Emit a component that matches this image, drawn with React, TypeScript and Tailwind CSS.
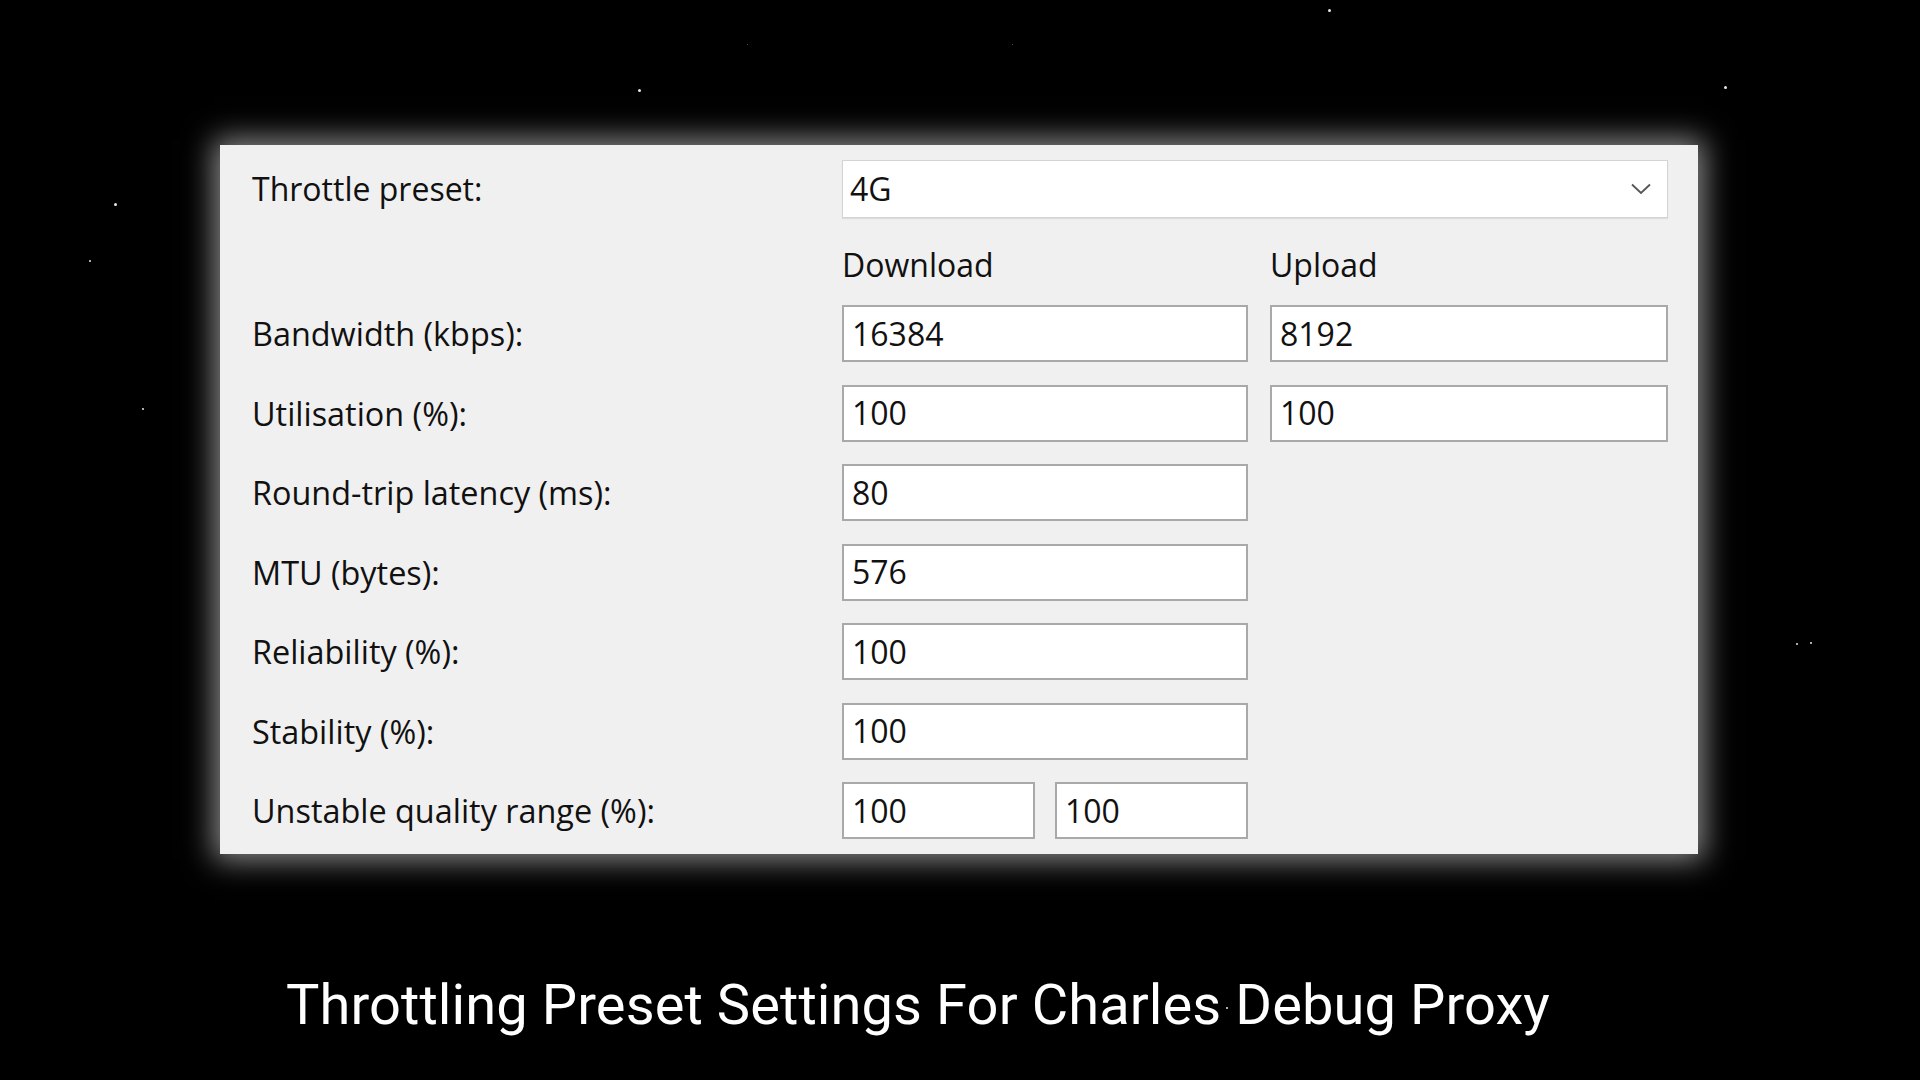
import React from "react";

const stars: [number, number, number][] = [
  [638, 89, 3],
  [1328, 9, 3],
  [1724, 86, 3],
  [114, 203, 3],
  [89, 260, 2],
  [142, 408, 2],
  [1796, 643, 2],
  [1810, 642, 2],
  [1226, 1007, 2],
  [747, 44, 1],
  [1012, 44, 1],
];

function Field({ value, className = "" }: { value: string; className?: string }) {
  return (
    <div
      className={
        "h-[57px] bg-white border-2 border-[#a9a9a9] flex items-center pl-[8px] text-[32px] text-[#111]" +
        " " +
        className
      }
    >
      {value}
    </div>
  );
}

function Row({ label, children }: { label: string; children: React.ReactNode }) {
  return (
    <div className="flex items-center h-[57px]">
      <div className="w-[590px] shrink-0 text-[32.4px] text-[#111]">{label}</div>
      {children}
    </div>
  );
}

export default function App() {
  return (
    <div
      className="relative w-[1920px] h-[1080px] bg-black overflow-hidden"
      style={{ fontFamily: '"Open Sans", "Noto Sans", sans-serif' }}
    >
      {stars.map(([x, y, s], i) => (
        <div
          key={i}
          className="absolute rounded-full bg-white"
          style={{ left: x, top: y, width: s, height: s, opacity: s === 1 ? 0.4 : 0.9 }}
        />
      ))}

      <div className="flex flex-col pt-[145px] pl-[220px]">
        <div className="w-[1478px] h-[709px] bg-[#f0f0f0] shadow-[0_0_28px_6px_rgba(255,255,255,0.55)] pl-[32px] pr-[30px] pt-[15px]">
          {/* Preset row */}
          <div className="flex items-center h-[58px]">
            <div className="w-[590px] shrink-0 text-[32px] text-[#111]">Throttle preset:</div>
            <div className="flex-1 h-[58px] bg-white border border-[#d4d4d4] shadow-[0_1px_1px_rgba(0,0,0,0.08)] flex items-center justify-between pl-[7px] pr-[16px] text-[32px] text-[#111]">
              <span>4G</span>
              <svg width="20" height="12" viewBox="0 0 20 12" fill="none">
                <polyline points="1,1.5 10,10 19,1.5" stroke="#555" strokeWidth="1.8" />
              </svg>
            </div>
          </div>

          {/* Headers */}
          <div className="flex items-center h-[87px]">
            <div className="w-[590px] shrink-0" />
            <div className="w-[406px] text-[32px] text-[#111] pt-[6px]">Download</div>
            <div className="w-[22px]" />
            <div className="text-[32px] text-[#111] pt-[6px]">Upload</div>
          </div>

          <div className="flex flex-col gap-[22.5px]">
            <Row label="Bandwidth (kbps):">
              <Field value="16384" className="w-[406px]" />
              <div className="w-[22px]" />
              <Field value="8192" className="w-[398px]" />
            </Row>
            <Row label="Utilisation (%):">
              <Field value="100" className="w-[406px]" />
              <div className="w-[22px]" />
              <Field value="100" className="w-[398px]" />
            </Row>
            <Row label="Round-trip latency (ms):">
              <Field value="80" className="w-[406px]" />
            </Row>
            <Row label="MTU (bytes):">
              <Field value="576" className="w-[406px]" />
            </Row>
            <Row label="Reliability (%):">
              <Field value="100" className="w-[406px]" />
            </Row>
            <Row label="Stability (%):">
              <Field value="100" className="w-[406px]" />
            </Row>
            <Row label="Unstable quality range (%):">
              <div className="w-[406px] grid grid-cols-2 gap-[20px]">
                <Field value="100" />
                <Field value="100" />
              </div>
            </Row>
          </div>
        </div>

        <div
          className="mt-[118px] pl-[66px] text-white text-[56px] leading-[66px] font-normal tracking-[0.1px]"
          style={{ fontFamily: 'Roboto, "Noto Sans", sans-serif' }}
        >
          Throttling Preset Settings For Charles Debug Proxy
        </div>
      </div>
    </div>
  );
}
